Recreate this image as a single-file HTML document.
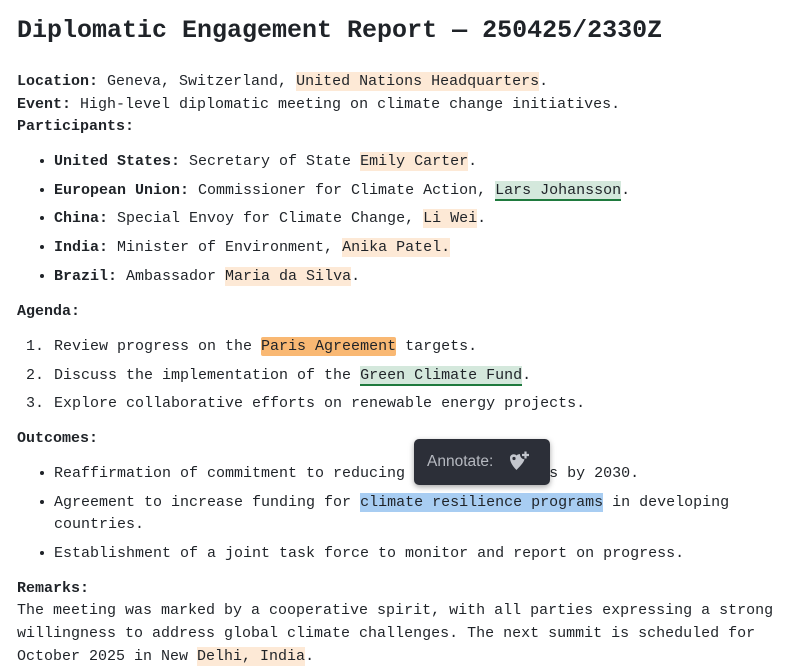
<!DOCTYPE html>
<html><head><meta charset="utf-8"><style>
html,body{margin:0;padding:0;background:#fff;width:800px;height:672px;overflow:hidden}
body{font-family:"Liberation Mono",monospace;font-size:15px;color:#1f2328;position:relative}
.l{position:absolute;left:17px;white-space:nowrap;line-height:22px;height:22px}
.li{left:54px}
.b{position:absolute;left:40px;width:4px;height:4px;border-radius:50%;background:#1f2328}
.n{position:absolute;left:26px;white-space:nowrap;line-height:22px}
b{font-weight:bold}
.p{background:#fde9d6;padding:1px 0}
.o{background:#f9b873;padding:1px 0;border-radius:2px}
.g{background:#d4e8dc;border-bottom:2px solid #1f7a3e;padding:1px 0 0}
.bl{background:#a8cdf2;padding:1px 0}
h1{position:absolute;left:17px;top:13px;margin:0;font-size:25px;font-weight:bold;line-height:36px;white-space:nowrap}
.tip{position:absolute;left:414px;top:439px;width:136px;height:46px;background:#2c2f38;border-radius:5px;box-shadow:0 2px 6px rgba(0,0,0,.35);font-family:"Liberation Sans",sans-serif;color:#b6b9c0;font-size:15.5px}
.tip span{position:absolute;left:13px;top:14px}
</style></head><body>
<h1>Diplomatic Engagement Report — 250425/2330Z</h1>
<div class="l" style="top:71px"><b>Location:</b> Geneva, Switzerland, <span class="p">United Nations Headquarters</span>.</div>
<div class="l" style="top:94px"><b>Event:</b> High-level diplomatic meeting on climate change initiatives.</div>
<div class="l" style="top:116px"><b>Participants:</b></div>

<div class="b" style="top:159px"></div><div class="l li" style="top:151px"><b>United States:</b> Secretary of State <span class="p">Emily Carter</span>.</div>
<div class="b" style="top:188px"></div><div class="l li" style="top:180px"><b>European Union:</b> Commissioner for Climate Action, <span class="g">Lars Johansson</span>.</div>
<div class="b" style="top:216px"></div><div class="l li" style="top:208px"><b>China:</b> Special Envoy for Climate Change, <span class="p">Li Wei</span>.</div>
<div class="b" style="top:245px"></div><div class="l li" style="top:237px"><b>India:</b> Minister of Environment, <span class="p">Anika Patel.</span></div>
<div class="b" style="top:274px"></div><div class="l li" style="top:266px"><b>Brazil:</b> Ambassador <span class="p">Maria da Silva</span>.</div>

<div class="l" style="top:301px"><b>Agenda:</b></div>
<div class="n" style="top:336px">1.</div><div class="l li" style="top:336px">Review progress on the <span class="o">Paris Agreement</span> targets.</div>
<div class="n" style="top:365px">2.</div><div class="l li" style="top:365px">Discuss the implementation of the <span class="g">Green Climate Fund</span>.</div>
<div class="n" style="top:393px">3.</div><div class="l li" style="top:393px">Explore collaborative efforts on renewable energy projects.</div>

<div class="l" style="top:428px"><b>Outcomes:</b></div>
<div class="b" style="top:471px"></div><div class="l li" style="top:463px">Reaffirmation of commitment to reducing carbon emissions by 2030.</div>
<div class="b" style="top:500px"></div><div class="l li" style="top:492px">Agreement to increase funding for <span class="bl">climate resilience programs</span> in developing</div>
<div class="l li" style="top:514px">countries.</div>
<div class="b" style="top:551px"></div><div class="l li" style="top:543px">Establishment of a joint task force to monitor and report on progress.</div>

<div class="l" style="top:578px"><b>Remarks:</b></div>
<div class="l" style="top:600px">The meeting was marked by a cooperative spirit, with all parties expressing a strong</div>
<div class="l" style="top:623px">willingness to address global climate challenges. The next summit is scheduled for</div>
<div class="l" style="top:646px">October 2025 in New <span class="p">Delhi, India</span>.</div>

<div class="tip"><span>Annotate:</span>
<svg style="position:absolute;left:94px;top:12px" width="24" height="22" viewBox="0 0 24 22"><path d="M2 7C2 3.5 6 2 8.5 4.5 9.5 3.5 11 3 12 3.2 12 6 14 8 16.5 8.3 16 11 13 14.5 8.5 19 4 14.5 2 10.5 2 7Z" fill="#c3c6cd"/><circle cx="6" cy="7.5" r="1.6" fill="#2c2f38"/><path d="M17.5 0.5v7M14 4h7" stroke="#c3c6cd" stroke-width="2.2"/></svg>
</div>
</body></html>
